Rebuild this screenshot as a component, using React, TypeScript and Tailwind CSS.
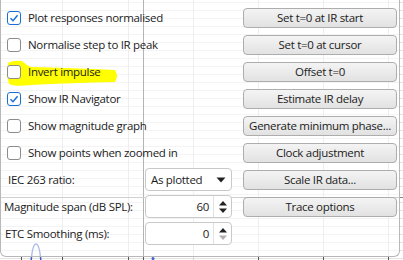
import React from "react";

const FONT = { fontFamily: '"Open Sans", "Noto Sans", sans-serif', fontSize: "11.5px", letterSpacing: "-0.3px" };

function Check({ checked }: { checked: boolean }) {
  return (
    <div
      className={
        "w-[14px] h-[14px] rounded-[3px] bg-white flex items-center justify-center shrink-0 border " +
        (checked ? "border-[#1a6fd6]" : "border-[#8c8c8c]")
      }
    >
      {checked && (
        <svg width="10" height="10" viewBox="0 0 10 10">
          <path d="M1.5 5.2 L4 7.7 L8.6 2.2" fill="none" stroke="#1a6fd6" strokeWidth="1.5" />
        </svg>
      )}
    </div>
  );
}

function Btn({ children }: { children: React.ReactNode }) {
  return (
    <div className="w-[154px] h-[20px] rounded-[4px] border border-[#adadad] bg-gradient-to-b from-[#f4f4f4] to-[#e2e2e2] flex items-center justify-center text-[#1b1b1b] leading-none whitespace-nowrap">
      {children}
    </div>
  );
}

function UpDown({ downDisabled }: { downDisabled?: boolean }) {
  return (
    <svg width="10" height="14" viewBox="0 0 10 14">
      <path d="M1 5.5 L5 1 L9 5.5 Z" fill="#222" />
      <path d="M1 8.5 L5 13 L9 8.5 Z" fill={downDisabled ? "#b0b0b0" : "#222"} />
    </svg>
  );
}

const checks: [string, boolean][] = [
  ["Plot responses normalised", true],
  ["Normalise step to IR peak", false],
  ["Invert impulse", false],
  ["Show IR Navigator", true],
  ["Show magnitude graph", false],
  ["Show points when zoomed in", false],
];

const buttons = [
  "Set t=0 at IR start",
  "Set t=0 at cursor",
  "Offset t=0",
  "Estimate IR delay",
  "Generate minimum phase...",
  "Clock adjustment",
  "Scale IR data...",
  "Trace options",
];

export default function App() {
  const hLines: number[] = [];
  for (let y = 2; y < 260; y += 8) hLines.push(y);
  const vLines = [62, 128, 193, 258, 323, 388];
  return (
    <div className="relative w-[403px] h-[260px] overflow-hidden bg-white whitespace-nowrap" style={FONT}>
      <svg className="absolute inset-0" width="403" height="260">
        {hLines.map((y) => (
          <line key={y} x1="0" x2="403" y1={y + 0.5} y2={y + 0.5} stroke="#e4e4e4" />
        ))}
        {vLines.map((x) => (
          <line key={x} x1={x + 0.5} x2={x + 0.5} y1="0" y2="260" stroke="#d4d4d4" />
        ))}
        <line x1="143.5" x2="143.5" y1="0" y2="260" stroke="#444" />
        <line x1="0" x2="403" y1="197.5" y2="197.5" stroke="#8a8a8a" />
        <path d="M31 262 C33 238 39 238 41 262" fill="none" stroke="#3a5fc8" strokeWidth="1.5" />
        <circle cx="153" cy="258.5" r="1.5" fill="#3a5fc8" />
        {[21, 62, 128, 143, 258, 323, 388].map((x) => (
          <line key={x} x1={x + 0.5} x2={x + 0.5} y1="257" y2="260" stroke="#555" />
        ))}
      </svg>

      <div className="relative w-[400px] h-[257px] rounded-b-[6px] border-r border-b border-l border-[#b8b8b8] bg-white/60 pt-[4px] text-[#1b1b1b]">
        <svg className="absolute left-0 top-0 pointer-events-none" width="130" height="95">
          <path
            d="M7 63 Q12 60 21 61 Q25 65 30 67 Q70 68 114 70 Q118 76 114 82 Q70 83 30 85 Q14 87 8 84 Q5 74 7 63 Z"
            fill="#ffff00"
          />
        </svg>
        {buttons.map((b, i) => (
          <div key={b} className="relative h-[27px] flex items-center">
            <div className="w-[242px] h-full flex items-center">
              {i < 6 && (
                <div className="flex items-center gap-[7px] pl-[6px]">
                  <Check checked={checks[i][1]} />
                  <span className="leading-none">{checks[i][0]}</span>
                </div>
              )}
              {i === 6 && (
                <div className="flex items-center w-full">
                  <span className="pl-[7px] w-[144px] leading-none">IEC 263 ratio:</span>
                  <div className="w-[87px] h-[23px] rounded-[4px] border border-[#c9c9c9] bg-white flex items-center justify-between pl-[5px] pr-[5px]">
                    <span className="leading-none">As plotted</span>
                    <svg width="10" height="6" viewBox="0 0 10 6">
                      <path d="M0.5 0.5 L9.5 0.5 L5 5.5 Z" fill="#222" />
                    </svg>
                  </div>
                </div>
              )}
              {i === 7 && (
                <div className="flex items-center w-full">
                  <span className="pl-[3px] w-[144px] leading-none">Magnitude span (dB SPL):</span>
                  <div className="w-[87px] h-[23px] rounded-[4px] border border-[#c9c9c9] bg-white flex items-center">
                    <span className="flex-1 text-right pr-[4px] leading-none">60</span>
                    <div className="w-[18px] h-full border-l border-[#e2e2e2] flex items-center justify-center">
                      <UpDown />
                    </div>
                  </div>
                </div>
              )}
            </div>
            <Btn>{b}</Btn>
          </div>
        ))}
        <div className="h-[27px] flex items-center">
          <span className="pl-[4px] w-[144px] leading-none">ETC Smoothing (ms):</span>
          <div className="w-[87px] h-[23px] rounded-[4px] border border-[#c9c9c9] bg-white flex items-center">
            <span className="flex-1 text-right pr-[4px] leading-none">0</span>
            <div className="w-[18px] h-full border-l border-[#e2e2e2] flex items-center justify-center">
              <UpDown downDisabled />
            </div>
          </div>
        </div>
      </div>
    </div>
  );
}
